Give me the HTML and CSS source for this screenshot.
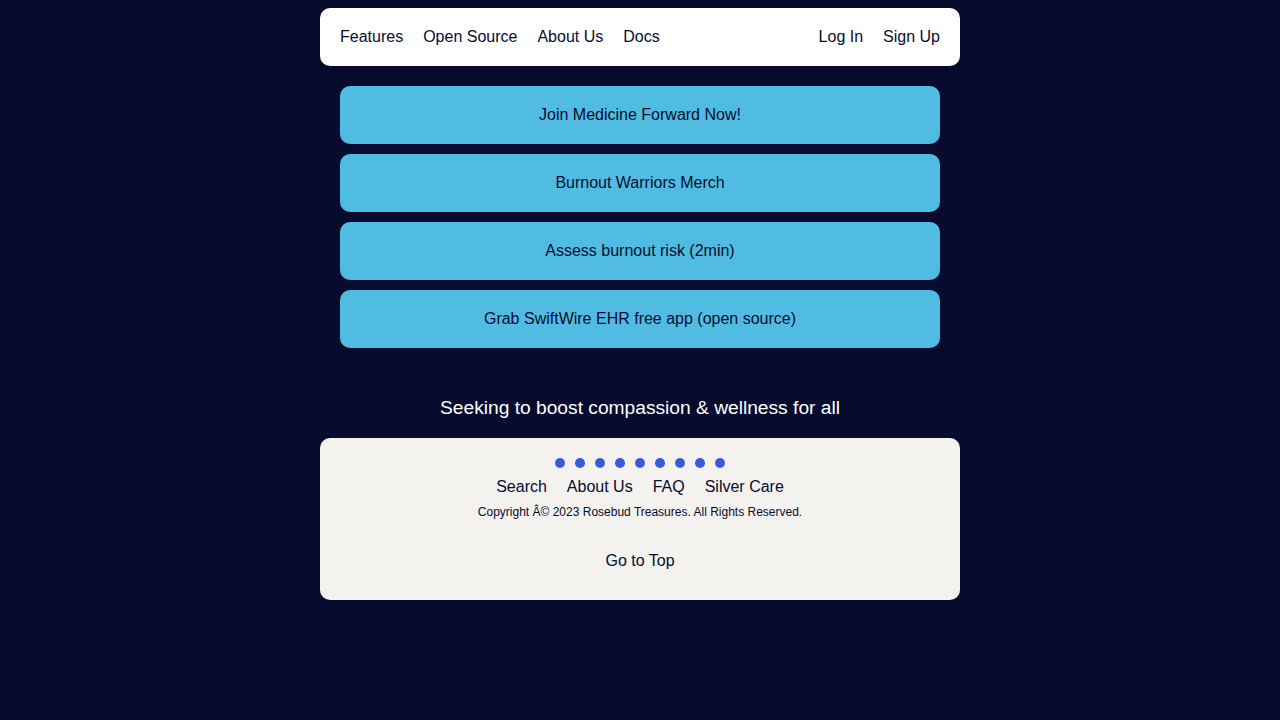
FILE: index.html
```html
<!DOCTYPE html>
<html lang="en">
<head>
  <meta charset="UTF-8">
  <title>Medicine Forward</title>
  <meta name="viewport" content="width=device-width, initial-scale=1.0">
  <link rel="stylesheet" href="styles.css">
</head>
<body>
  <div class="container">
    <header class="topbar">
      <nav class="nav-left">
        <a href="#">Features</a>
        <a href="#">Open Source</a>
        <a href="#">About Us</a>
        <a href="#">Docs</a>
      </nav>
      <nav class="nav-right">
        <a href="#">Log In</a>
        <a href="#">Sign Up</a>
      </nav>
    </header>

    <main class="link-list">
      <a class="big-btn" href="#">Join Medicine Forward Now!</a>
      <a class="big-btn" href="#">Burnout Warriors Merch</a>
      <a class="big-btn" href="#">Assess burnout risk (2min)</a>
      <a class="big-btn" href="#">Grab SwiftWire EHR free app (open source)</a>
    </main>

    <p class="tagline">Seeking to boost compassion &amp; wellness for all</p>

    <footer class="footer">
      <div class="dots">
        <span></span><span></span><span></span><span></span><span></span>
        <span></span><span></span><span></span><span></span>
      </div>
      <nav class="footer-links">
        <a href="#">Search</a>
        <a href="#">About Us</a>
        <a href="#">FAQ</a>
        <a href="#">Silver Care</a>
      </nav>
      <p class="copyright">Copyright Â© 2023 Rosebud Treasures. All Rights Reserved.</p>
      <a class="to-top" href="#">Go to Top</a>
    </footer>
  </div>
</body>
</html>
```
FILE: styles.css
```css
* {
  box-sizing: border-box;
  font-family: 'Liberation Sans', Arial, sans-serif;
}

body {
  margin: 0;
  padding: 8px 0;
  background: #070c2f;
  color: #070c2f;
}

a {
  color: #070c2f;
  text-decoration: none;
}

.container {
  width: 640px;
  margin: 0 auto;
}

.topbar {
  height: 58px;
  background: #fff;
  border-radius: 10px;
  padding: 0 20px;
  display: flex;
  align-items: center;
  justify-content: space-between;
  font-size: 16px;
}

.nav-left,
.nav-right {
  display: flex;
  gap: 20px;
}

.link-list {
  margin: 20px 20px 0;
  display: flex;
  flex-direction: column;
  gap: 10px;
}

.big-btn {
  height: 58px;
  display: flex;
  align-items: center;
  justify-content: center;
  background: #50bce2;
  border-radius: 10px;
  font-size: 16px;
}

.tagline {
  margin: 49px 0 19px;
  text-align: center;
  color: #fff;
  font-size: 19.2px;
  line-height: 22px;
}

.footer {
  background: #f3f2ee;
  border-radius: 10px;
  padding: 20px 0 30px;
  display: flex;
  flex-direction: column;
  align-items: center;
}

.dots {
  display: flex;
  gap: 10px;
}

.dots span {
  width: 10px;
  height: 10px;
  border-radius: 50%;
  background: #3a5bd9;
}

.footer-links {
  display: flex;
  gap: 20px;
  margin-top: 9px;
  font-size: 16px;
  line-height: 19px;
}

.copyright {
  margin: 9px 0 0;
  font-size: 12px;
  line-height: 14px;
}

.to-top {
  margin-top: 32px;
  font-size: 16px;
  line-height: 19px;
}
```
